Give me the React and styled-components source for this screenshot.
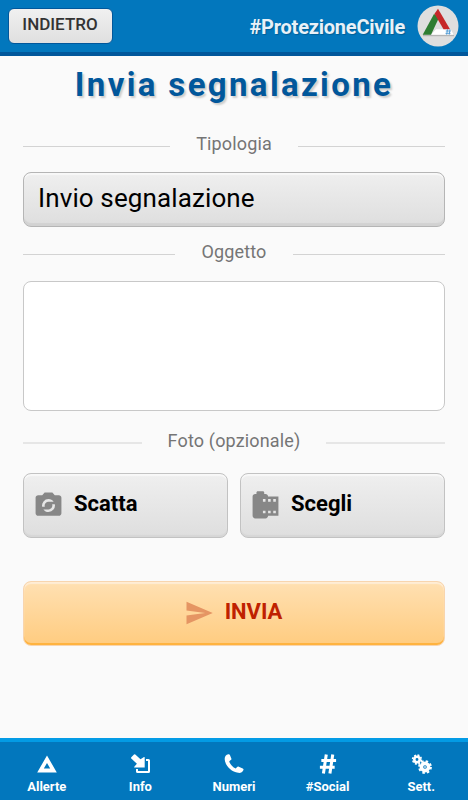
import React from 'react'
import styled, {createGlobalStyle} from 'styled-components'
import {MdPartyMode, MdCameraRoll, MdSend} from 'react-icons/md'

const tabs = [
  {label: 'Allerte', icon: <AlertIcon />},
  {label: 'Info', icon: <InfoIcon />},
  {label: 'Numeri', icon: <PhoneIcon />},
  {label: '#Social', icon: <HashIcon />},
  {label: 'Sett.', icon: <GearsIcon />}
]

export default function App() {
  return (
    <Page>
      <GlobalStyle />
      <Header>
        <BackButton>INDIETRO</BackButton>
        <Brand>
          <span>#ProtezioneCivile</span>
          <Logo />
        </Brand>
      </Header>
      <Form>
        <Title>Invia segnalazione</Title>
        <Legend $height={30}><span>Tipologia</span></Legend>
        <Select>Invio segnalazione</Select>
        <Legend $height={30}><span>Oggetto</span></Legend>
        <TextArea />
        <Legend $height={26} $light><span>Foto (opzionale)</span></Legend>
        <Photos>
          <PhotoButton><MdPartyMode size={31} />Scatta</PhotoButton>
          <PhotoButton><MdCameraRoll size={31} />Scegli</PhotoButton>
        </Photos>
        <Submit><MdSend size={30} />INVIA</Submit>
      </Form>
      <Footer>
        {tabs.map(tab =>
          <Tab key={tab.label}>
            <TabIcon>{tab.icon}</TabIcon>
            {tab.label}
          </Tab>
        )}
      </Footer>
    </Page>
  )
}

function Logo() {
  return (
    <svg width="42" height="42" viewBox="0 0 42 42">
      <circle cx="21" cy="21" r="20.5" fill="#dedede" />
      <path d="M6 29.700h31v1.500H6z" fill="#b5b5b5" />
      <path d="M19 24.300h14.700l3 5.400H14z" fill="#fff" />
      <path d="M5.700 29.700L17 9l5.300 3L14 29.700z" fill="#2e7d32" />
      <path d="M17.500 8.700L21 3.700 33 24.300h-6.500z" fill="#c62828" />
      <path d="M30.500 24.300l-.8 5.400M33 24.300l-.8 5.400M28.800 26h5M28.500 28.300h5" stroke="#4b97d3" strokeWidth=".9" />
    </svg>
  )
}

function AlertIcon() {
  return (
    <svg width="20" height="18" viewBox="0 0 20 18">
      <path fillRule="evenodd" fill="#fff" d="M10 .5L19.800 17.500H.200zM10 8L6.800 13.500h6.400z" />
    </svg>
  )
}

function InfoIcon() {
  return (
    <svg width="22" height="20" viewBox="-2 0 22 20" fill="#fff">
      <path d="M0 4.200Q0 3.500.5 3L3 .5q.7-.5 1.300 0l5.200 4.800L13 3q.7-.3.7.6v9.900H3.600q-.8 0-.3-.8l2.600-3z" />
      <path d="M15 5h2.500q1.500 0 1.500 1.500v11q0 1.500-1.500 1.500h-11Q5 19 5 17.500V15h2v2h10V7h-2z" />
    </svg>
  )
}

function PhoneIcon() {
  return (
    <svg width="20" height="20" viewBox="0 0 20 21" fill="#fff">
      <path d="M4 .3c.8-.3 1.400 0 1.700.7l1.500 3.600c.3.8 0 1.400-.6 1.800L5 7.600c.8 3.300 3.600 6.300 6.900 7.600l1.300-1.500c.5-.6 1.100-.7 1.800-.4l4.200 1.800c.8.4 1 1 .7 1.700-.9 2.200-3 3.400-5.500 3C6.800 18.700.4 11.700.2 5.200.2 2.600 1.700.9 4 .3z" />
    </svg>
  )
}

function HashIcon() {
  return (
    <svg width="18" height="20" viewBox="0 0 18 21" fill="none" stroke="#fff" strokeWidth="3.200">
      <path d="M7.200.5L4.200 20.500M14 .5L11 20.500M2 6.800h15.500M.5 14h15.500" />
    </svg>
  )
}

// each gear is a ring with a dashed outer ring for the teeth
function GearsIcon() {
  return (
    <svg width="22" height="20" viewBox="-2 0 22 20" fill="none" stroke="#fff">
      <circle cx="5" cy="5.500" r="2.700" strokeWidth="2.600" />
      <circle cx="5" cy="5.500" r="4.400" strokeWidth="1.600" strokeDasharray="1.900 1.556" />
      <circle cx="13" cy="13" r="3.600" strokeWidth="3.600" />
      <circle cx="13" cy="13" r="5.900" strokeWidth="2" strokeDasharray="2.500 2.134" />
      <circle cx="13" cy="13" r=".5" strokeWidth="1" />
    </svg>
  )
}

const GlobalStyle = createGlobalStyle`
  * {
    box-sizing: border-box;
  }

  body {
    margin: 0;
    background: #fafafa;
  }

  button, textarea {
    font-family: Roboto, sans-serif;
    margin: 0;
  }
`
const Page = styled.div`
  display: flex;
  flex-direction: column;
  height: 800px;
  overflow: hidden;
  background: #fafafa;
  font-family: Roboto, sans-serif;
`
const Header = styled.header`
  display: flex;
  align-items: center;
  justify-content: space-between;
  height: 56px;
  padding: 0 9px 0 8px;
  background: #0277bd;
  border-bottom: 4px solid #01579b;
`
const BackButton = styled.button`
  height: 36px;
  width: 105px;
  padding: 0 1px 4px 0;
  border: 1px solid #01579b;
  border-radius: 6px;
  background: linear-gradient(#f0f0f0, #dfdfdf);
  color: #333;
  font-size: 17px;
  font-weight: 500;
`
const Brand = styled.div`
  display: flex;
  align-items: center;
  gap: 12px;
  color: #e8f1f8;
  font-size: 20px;
  font-weight: 700;
  letter-spacing: -0.22px;
  text-shadow: 1px 1px 1px rgba(0, 0, 0, 0.2);

  span {
    padding-top: 2px;
  }
`
const Form = styled.main`
  flex: 1;
  display: flex;
  flex-direction: column;
  padding: 0 23px;
`
const Title = styled.h1`
  margin: 0;
  padding-top: 9px;
  height: 75px;
  text-align: center;
  color: #01579b;
  font-size: 33px;
  line-height: 40px;
  letter-spacing: 2.35px;
  white-space: nowrap;
  text-shadow: 2px 2px 2px rgba(0, 0, 0, 0.18);
`
const Legend = styled.div`
  display: flex;
  align-items: center;
  gap: 26px;
  height: ${props => props.$height}px;
  color: #757575;
  font-size: 18px;
  letter-spacing: 0.15px;

  span {
    padding-bottom: ${props => props.$light ? 6 : 5}px;
  }

  &::before, &::after {
    content: '';
    flex: 1;
    height: ${props => props.$light ? 2 : 1}px;
    background: ${props => props.$light ? '#e6e6e6' : '#d3d3d3'};
  }
`
const GreyButton = styled.button`
  display: flex;
  align-items: center;
  border: 1px solid #c2c2c2;
  border-radius: 8px;
  background: linear-gradient(#efefef, #dedede);
  box-shadow: inset 0 2px 1px #f8f8f8, inset 0 -3px 1px #d2d2d2;
  color: #000;
`
const Select = styled(GreyButton)`
  height: 55px;
  margin: 11px 0 12px;
  padding: 0 14px 3px;
  border-color: #b5b5b5;
  font-size: 26px;
  letter-spacing: 0.12px;
`
const TextArea = styled.textarea`
  height: 130px;
  margin: 12px 0 19px;
  border: 1px solid #c8c8c8;
  border-radius: 8px;
  background: #fff;
  resize: none;
`
const Photos = styled.div`
  display: grid;
  grid-template-columns: 1fr 1fr;
  gap: 12px;
  margin: 17px 0 43px;
`
const PhotoButton = styled(GreyButton)`
  gap: 10px;
  height: 65px;
  padding: 0 9px 4px;
  box-shadow: inset 0 2px 1px #f8f8f8, inset 0 -2px 1px #d6d6d6;
  font-size: 22px;
  font-weight: 700;

  svg {
    margin-top: 3px;
    color: #878787;
  }
`
const Submit = styled.button`
  display: flex;
  align-items: center;
  justify-content: center;
  gap: 11px;
  height: 65px;
  padding: 0 2px 4px 0;
  border: 1px solid #f8d5ae;
  border-radius: 8px;
  background: linear-gradient(#ffe0b2, #ffcc80);
  box-shadow: inset 0 2px 1px #ffedd5, inset 0 -2px 0 #ffb33f;
  color: #bf2100;
  font-size: 22px;
  font-weight: 700;

  svg {
    margin-top: 3px;
    color: #e59563;
  }
`
const Footer = styled.nav`
  display: flex;
  height: 62px;
  border-top: 4px solid #039be5;
  background: #0277bd;
`
const Tab = styled.a`
  flex: 1;
  display: flex;
  flex-direction: column;
  align-items: center;
  padding-top: 12px;
  color: #fff;
  font-size: 13px;
  font-weight: 700;
  line-height: 16px;
`
const TabIcon = styled.div`
  display: flex;
  align-items: center;
  justify-content: center;
  height: 20px;
  margin-bottom: 5px;
`
